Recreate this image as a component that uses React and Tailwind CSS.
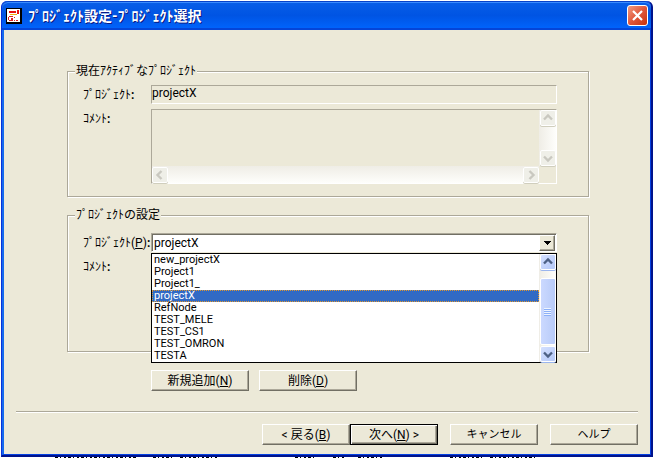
import React, { useState } from 'react';

const PROJECTS = [
    'new_projectX',
    'Project1',
    'Project1_',
    'projectX',
    'RefNode',
    'TEST_MELE',
    'TEST_CS1',
    'TEST_OMRON',
    'TESTA',
];

const CHEVRONS = {
    up: 'M4 9.5 8 5.5l4 4',
    down: 'M4 6.5l4 4 4-4',
    left: 'M9.5 4l-4 4 4 4',
    right: 'M6.5 4l4 4-4 4',
};

// XP style scroll arrow, grey when disabled
const ScrollButton = ({ dir, label, disabled = false }) => (
    <button
        type="button"
        aria-label={label}
        disabled={disabled}
        className={`flex h-4 w-4 shrink-0 items-center justify-center rounded-xs border border-white ${
            disabled
                ? 'bg-[#efefe8] text-[#c9c8c0] shadow-[0_1px_0_#d0cebd]'
                : 'bg-linear-to-br from-[#d4e0ff] to-[#b4c8f8] text-[#4d6185] shadow-[0_1px_0_#9ab5ee]'
        }`}
    >
        <svg viewBox="0 0 16 16" className="h-4 w-4 shrink-0">
            <path d={CHEVRONS[dir]} fill="none" stroke="currentColor" strokeWidth="2.4" />
        </svg>
    </button>
);

const GroupBox = ({ title, className = '', children }) => (
    <fieldset
        className={`border border-[#aca899] pl-[15px] pr-[31px] shadow-[1px_1px_0_#fff,inset_1px_1px_0_#fff] ${className}`}
    >
        <legend className="-ml-2 h-4 bg-[#ece9d8] px-px leading-4">{title}</legend>
        {children}
    </fieldset>
);

const Row = ({ id, label, children }) => (
    <div className="flex items-start">
        <label htmlFor={id} className="w-[68px] shrink-0 whitespace-nowrap pt-0.5 leading-4">
            {label}
            <b>:</b>
        </label>
        <div className="relative min-w-0 flex-1">{children}</div>
    </div>
);

const SUNKEN = 'border border-t-[#aca899] border-l-[#aca899] border-r-white border-b-white';

const CommentBox = ({ id, className = '' }) => (
    <div className={`grid grid-cols-[1fr_17px] grid-rows-[1fr_17px] ${SUNKEN} ${className}`}>
        <textarea id={id} disabled className="block h-full w-full resize-none bg-transparent px-px" />
        <div className="flex flex-col items-center justify-between bg-linear-to-r from-[#efede6] to-[#fefefb]">
            <ScrollButton dir="up" label="上へ" disabled />
            <ScrollButton dir="down" label="下へ" disabled />
        </div>
        <div className="flex items-center justify-between bg-linear-to-b from-[#efede6] to-[#fefefb]">
            <ScrollButton dir="left" label="左へ" disabled />
            <ScrollButton dir="right" label="右へ" disabled />
        </div>
    </div>
);

const PushButton = ({ className = 'w-[88px]', isDefault = false, children }) => (
    <button
        type="button"
        className={`h-[21px] whitespace-nowrap bg-[#ece9d8] text-center leading-4 ${className} ${
            isDefault
                ? 'border border-black shadow-[inset_1px_1px_0_#fff,inset_-1px_-1px_0_#716f64,inset_-2px_-2px_0_#aca899]'
                : 'border border-t-white border-l-white border-r-[#716f64] border-b-[#716f64] shadow-[inset_-1px_-1px_0_#aca899]'
        }`}
    >
        {children}
    </button>
);

const AppIcon = () => (
    <svg viewBox="0 0 16 16" className="h-4 w-4 shrink-0" shapeRendering="crispEdges">
        <path d="M0 0h16v16H0z" fill="#000" />
        <path d="M1 1h13v13H1z" fill="#fff" />
        <path d="M3 3h7v2H3z" fill="#e81010" />
        <path d="M4 6h7v1H4z" fill="#f0b010" />
        <path d="M11 2h2v4h-2z" fill="#e81010" />
        <path d="M3 8h4v1H3zM2 9h1v3H2zM3 12h4v1H3zM5 10h2v2H5zM8 9h1v1H8zM8 12h1v1H8zM10 12h2v1h-2z" fill="#d82020" />
    </svg>
);

const TitleBar = () => (
    <header className="flex h-[29px] items-center justify-between rounded-t-md bg-linear-to-b from-[#0a5fe8] via-[#0054e3] to-[#0066ff] pl-1 pr-[3px] shadow-[inset_0_1px_0_#0842c8,inset_0_2px_0_#3a8cff,inset_0_-2px_0_#0445d8]">
        <h1 className="flex items-center gap-1.5 text-sm font-bold text-white [text-shadow:1px_1px_0_#0a1883]">
            <AppIcon />
            ﾌﾟﾛｼﾞｪｸﾄ設定-ﾌﾟﾛｼﾞｪｸﾄ選択
        </h1>
        <button
            type="button"
            aria-label="閉じる"
            className="flex h-[21px] w-[21px] items-center justify-center rounded-[3px] border border-white bg-linear-to-br from-[#f09a80] via-[#e0563a] to-[#c83000]"
        >
            <svg viewBox="0 0 19 19" className="h-[19px] w-[19px]">
                <path d="M5 5l9 9M14 5l-9 9" stroke="#fff" strokeWidth="2.2" />
            </svg>
        </button>
    </header>
);

const ProjectCombo = ({ id, value, onChange }) => (
    <>
        <select
            id={id}
            value={value}
            onChange={(e) => onChange(e.target.value)}
            className="block h-[19px] w-full appearance-none border border-t-[#aca899] border-l-[#aca899] border-r-white border-b-white bg-white pl-0.5 text-xs leading-4 shadow-[inset_1px_1px_0_#716f64]"
        >
            {PROJECTS.map((name) => (
                <option key={name}>{name}</option>
            ))}
        </select>
        <span className="pointer-events-none absolute top-0.5 right-0.5 flex h-4 w-4 items-center justify-center border border-t-white border-l-white border-r-[#716f64] border-b-[#716f64] bg-[#ece9d8] shadow-[inset_-1px_-1px_0_#aca899]">
            <svg viewBox="0 0 7 4" className="h-1 w-[7px]" shapeRendering="crispEdges">
                <path d="M0 0h7v1H0zM1 1h5v1H1zM2 2h3v1H2zM3 3h1v1H3z" />
            </svg>
        </span>

        <div className="absolute top-full right-0 left-0 z-10 mt-px flex border border-black bg-white">
            <ul role="listbox" aria-label="プロジェクト" className="min-w-0 flex-1 text-[11px]">
                {PROJECTS.map((name) => (
                    <li
                        key={name}
                        role="option"
                        aria-selected={name === value}
                        onClick={() => onChange(name)}
                        className={`h-3 px-0.5 leading-3 ${
                            name === value
                                ? 'bg-[#316ac5] text-white outline-1 -outline-offset-1 outline-dotted outline-[#e0962e]'
                                : ''
                        }`}
                    >
                        {name}
                    </li>
                ))}
            </ul>
            <div className="flex w-[17px] flex-col items-center bg-linear-to-r from-[#efede6] to-[#fefefb]">
                <ScrollButton dir="up" label="上へ" />
                <div className="mt-2 mb-px flex w-4 flex-1 flex-col items-center justify-center gap-px rounded-xs border border-white bg-linear-to-r from-[#cbd9ff] to-[#b8cbf8]">
                    <span className="h-px w-[7px] bg-[#eef4fe] shadow-[0_1px_0_#8cb0f8]" />
                    <span className="h-px w-[7px] bg-[#eef4fe] shadow-[0_1px_0_#8cb0f8]" />
                    <span className="h-px w-[7px] bg-[#eef4fe] shadow-[0_1px_0_#8cb0f8]" />
                    <span className="h-px w-[7px] bg-[#eef4fe] shadow-[0_1px_0_#8cb0f8]" />
                </div>
                <ScrollButton dir="down" label="下へ" />
            </div>
        </div>
    </>
);

// Sliver of the window behind, peeking out under the dialog
const BackgroundSliver = () => (
    <svg viewBox="0 0 653 1" className="block h-px w-full" preserveAspectRatio="none" shapeRendering="crispEdges" aria-hidden="true">
        <path
            d="M55 .5h82M153 .5h20M180 .5h38M295 .5h22M333 .5h12M358 .5h26M450 .5h34M490 .5h48"
            stroke="#000"
            strokeDasharray="3 2 1 3 2 2"
        />
    </svg>
);

const App = () => {
    const [project, setProject] = useState('projectX');

    return (
        <div className="bg-white pt-px font-['Roboto','Noto_Sans_CJK_JP',sans-serif] text-xs text-black">
            <div className="ml-px rounded-t-md border-r-2 border-b-2 border-l border-l-[#0831d9] border-r-[#00138c] border-b-[#00138c] bg-[#0831d9]">
                <TitleBar />
                <main className="border-r border-b border-l-2 border-l-[#166aee] border-r-[#0440e0] border-b-[#0440e0] bg-[#ece9d8] pt-[33px] pb-[9px]">
                    <div className="mr-[61px] ml-[63px] flex flex-col gap-2.5">
                        <GroupBox title="現在ｱｸﾃｨﾌﾞなﾌﾟﾛｼﾞｪｸﾄ" className="pt-1.5 pb-3">
                            <div className="flex flex-col gap-[5px]">
                                <Row id="active-project" label="ﾌﾟﾛｼﾞｪｸﾄ">
                                    <input
                                        id="active-project"
                                        readOnly
                                        value="projectX"
                                        className={`block h-[19px] w-full bg-transparent pb-1 leading-3 ${SUNKEN}`}
                                    />
                                </Row>
                                <Row id="active-comment" label="ｺﾒﾝﾄ">
                                    <CommentBox id="active-comment" className="h-[75px]" />
                                </Row>
                            </div>
                        </GroupBox>

                        <GroupBox title="ﾌﾟﾛｼﾞｪｸﾄの設定" className="pt-2.5 pb-3">
                            <div className="flex flex-col gap-[5px]">
                                <Row
                                    id="project"
                                    label={
                                        <>
                                            ﾌﾟﾛｼﾞｪｸﾄ(<u>P</u>)
                                        </>
                                    }
                                >
                                    <ProjectCombo id="project" value={project} onChange={setProject} />
                                </Row>
                                <Row id="comment" label="ｺﾒﾝﾄ">
                                    <CommentBox id="comment" className="h-[82px]" />
                                </Row>
                            </div>
                        </GroupBox>
                    </div>

                    <div className="mt-[18px] ml-[147px] flex gap-2.5">
                        <PushButton className="w-[98px]">
                            新規追加(<u>N</u>)
                        </PushButton>
                        <PushButton className="w-[98px]">
                            削除(<u>D</u>)
                        </PushButton>
                    </div>

                    <hr className="mx-3 mt-5 border-t border-b border-t-[#aca899] border-b-white" />

                    <div className="mt-[11px] mr-3 flex justify-end gap-3">
                        <div className="flex">
                            <PushButton>
                                &lt; 戻る(<u>B</u>)
                            </PushButton>
                            <PushButton isDefault>
                                次へ(<u>N</u>) &gt;
                            </PushButton>
                        </div>
                        <PushButton className="w-[88px] text-[11px]">キャンセル</PushButton>
                        <PushButton className="w-[88px] text-[11px]">ヘルプ</PushButton>
                    </div>
                </main>
            </div>
            <BackgroundSliver />
        </div>
    );
};

export default App;
